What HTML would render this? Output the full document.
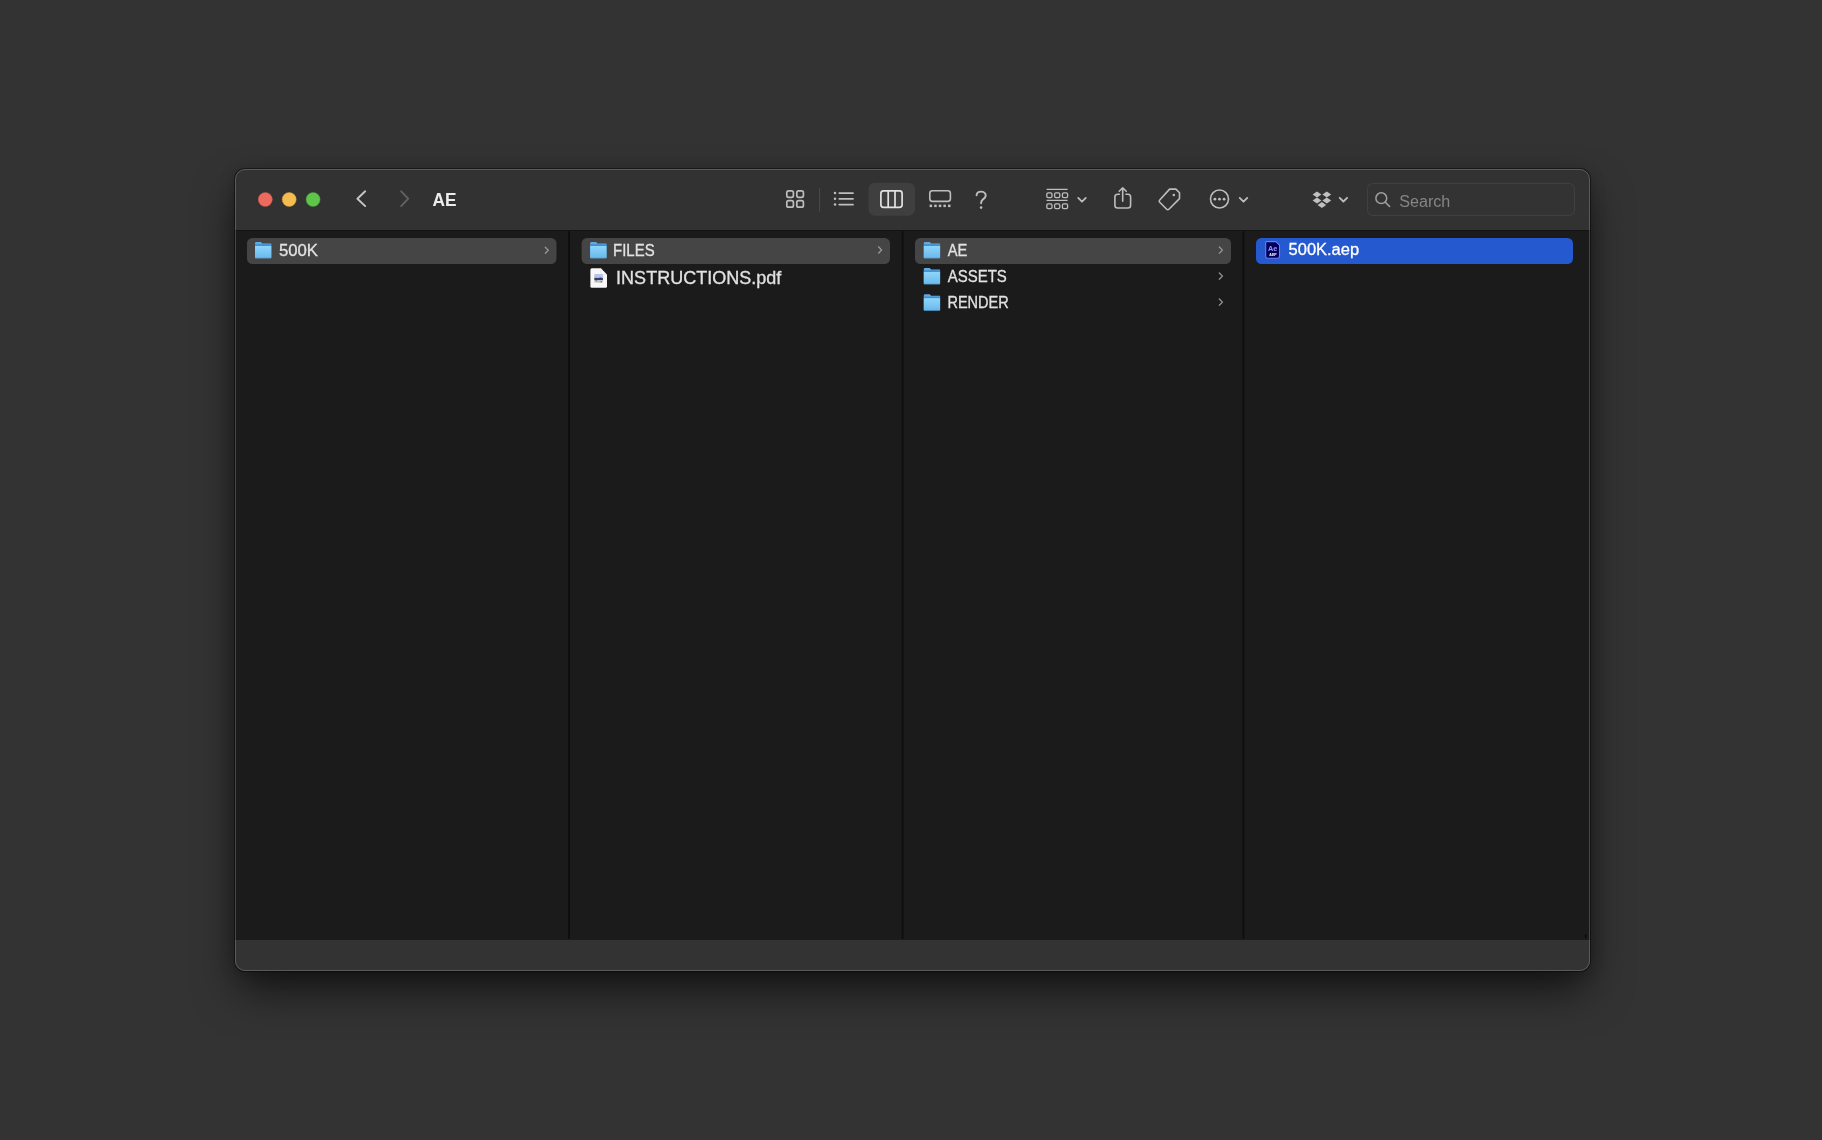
<!DOCTYPE html>
<html><head><meta charset="utf-8">
<style>
html,body{margin:0;padding:0;}
body{width:1822px;height:1140px;background:#333333;position:relative;overflow:hidden;font-family:"Liberation Sans",sans-serif;}
.win{position:absolute;left:235px;top:169px;width:1355px;height:802px;border-radius:10px;background:#323232;
  box-shadow:0 0 0 1px rgba(0,0,0,0.45), 0 22px 44px -4px rgba(0,0,0,0.62), 0 3px 16px rgba(0,0,0,0.22);overflow:hidden;}
.winborder{position:absolute;left:235px;top:169px;width:1355px;height:802px;border-radius:10px;box-sizing:border-box;border:1px solid rgba(255,255,255,0.2);pointer-events:none;}
.content{position:absolute;left:0;top:61px;width:100%;height:710px;background:#1b1b1b;border-top:1px solid #131313;box-sizing:border-box;}
.bottom{position:absolute;left:0;top:771px;width:100%;height:31px;background:#333333;}
svg.ov{position:absolute;left:0;top:0;width:1822px;height:1140px;will-change:transform;-webkit-font-smoothing:antialiased;}
</style></head><body>
<div class="win">
  <div class="content"></div>
  <div class="bottom"></div>
</div>
<div class="winborder"></div>
<svg class="ov" viewBox="0 0 1822 1140">
<defs>
  <linearGradient id="fg" x1="0" y1="0" x2="0" y2="1">
    <stop offset="0" stop-color="#8cd6fd"/><stop offset="1" stop-color="#6ab9ec"/>
  </linearGradient>
  <g id="folder">
    <path d="M0.3,1.2 Q0.3,0 1.5,0 H6.2 L7.6,1.5 H16.1 Q16.6,1.5 16.6,2 V15.8 H0.3 Z" fill="#62abdf"/>
    <rect x="0.3" y="2.3" width="16.3" height="1.5" fill="#3d8cd0"/>
    <path d="M0.3,3.9 H16.6 V15.6 Q16.6,16.2 16,16.2 H0.9 Q0.3,16.2 0.3,15.6 Z" fill="url(#fg)"/>
    <rect x="0.6" y="15.5" width="15.7" height="0.7" fill="#5aa6dc"/>
  </g>
</defs>
<!-- column dividers -->
<rect x="568" y="231" width="2" height="708" fill="#0e0e0e"/>
<rect x="901.7" y="231" width="1.8" height="708" fill="#0e0e0e"/>
<rect x="1242.5" y="231" width="1.8" height="708" fill="#0e0e0e"/>
<!-- traffic lights -->
<circle cx="265.3" cy="199.5" r="7.0" fill="#ee6a5f" stroke="#c9544a" stroke-width="0.5"/>
<circle cx="289.2" cy="199.5" r="7.0" fill="#f5bd4f" stroke="#d29a3c" stroke-width="0.5"/>
<circle cx="313.1" cy="199.5" r="7.0" fill="#5ec44a" stroke="#47a03a" stroke-width="0.5"/>
<!-- nav -->
<path d="M365.2,191.3 L357.4,198.7 L365.2,206.1" fill="none" stroke="#c6c6c6" stroke-width="1.9" stroke-linecap="round" stroke-linejoin="round"/>
<path d="M401.2,191.3 L408.2,198.7 L401.2,206.1" fill="none" stroke="#626262" stroke-width="1.9" stroke-linecap="round" stroke-linejoin="round"/>
<text x="432.6" y="205.6" font-family="Liberation Sans" font-weight="bold" font-size="18" fill="#ececec" textLength="24" lengthAdjust="spacingAndGlyphs">AE</text>
<!-- toolbar icons -->
<g fill="none" stroke="#bdbdbd" stroke-width="1.7">
  <rect x="786.8" y="190.8" width="6.6" height="6.6" rx="1.8"/>
  <rect x="796.8" y="190.8" width="6.6" height="6.6" rx="1.8"/>
  <rect x="786.8" y="200.6" width="6.6" height="6.6" rx="1.8"/>
  <rect x="796.8" y="200.6" width="6.6" height="6.6" rx="1.8"/>
</g>
<rect x="819" y="188.2" width="1.1" height="23.4" fill="#474747"/>
<g fill="#bdbdbd">
  <circle cx="835" cy="193.1" r="1.25"/><circle cx="835" cy="198.8" r="1.25"/><circle cx="835" cy="204.6" r="1.25"/>
</g>
<g stroke="#bdbdbd" stroke-width="1.8" stroke-linecap="round">
  <path d="M839.3,193.1 H853"/><path d="M839.3,198.8 H853"/><path d="M839.3,204.6 H853"/>
</g>
<rect x="868.5" y="182.7" width="46.5" height="33" rx="6.5" fill="#3f3f3f"/>
<g fill="none" stroke="#e2e2e2" stroke-width="1.7">
  <rect x="880.9" y="190.9" width="21.2" height="16.4" rx="2.6"/>
  <path d="M888.2,191 V207.2 M895,191 V207.2"/>
</g>
<rect x="929.8" y="190.8" width="20.6" height="10.6" rx="2.6" fill="none" stroke="#bdbdbd" stroke-width="1.6"/>
<g fill="#bdbdbd">
  <rect x="929.6" y="204.6" width="2.5" height="2.5"/><rect x="934.2" y="204.6" width="2.5" height="2.5"/><rect x="938.8" y="204.6" width="2.5" height="2.5"/><rect x="943.4" y="204.6" width="2.5" height="2.5"/><rect x="948" y="204.6" width="2.5" height="2.5"/>
</g>
<path d="M976.6,195.3 C976.6,192.7 978.6,191.6 981.1,191.6 C983.7,191.6 985.7,193.2 985.7,195.6 C985.7,198 983.8,198.7 982.6,199.7 C981.5,200.6 981.1,201.4 981.1,203.2" fill="none" stroke="#bdbdbd" stroke-width="1.95" stroke-linecap="round"/>
<circle cx="981.1" cy="207.6" r="1.3" fill="#bdbdbd"/>
<!-- group icon -->
<g stroke="#bdbdbd" fill="none">
  <path d="M1046.6,189.3 H1067.6 M1046.6,200.4 H1067.6" stroke-width="1.3"/>
  <g stroke-width="1.3">
    <rect x="1046.8" y="192.8" width="5.2" height="4.8" rx="1.4"/>
    <rect x="1054.6" y="192.8" width="5.2" height="4.8" rx="1.4"/>
    <rect x="1062.4" y="192.8" width="5.2" height="4.8" rx="1.4"/>
    <rect x="1046.8" y="203.8" width="5.2" height="4.8" rx="1.4"/>
    <rect x="1054.6" y="203.8" width="5.2" height="4.8" rx="1.4"/>
    <rect x="1062.4" y="203.8" width="5.2" height="4.8" rx="1.4"/>
  </g>
</g>
<g fill="none" stroke="#bdbdbd" stroke-width="1.8" stroke-linecap="round" stroke-linejoin="round">
  <path d="M1078.2,197.9 L1082,201.7 L1085.8,197.9"/>
  <path d="M1239.7,197.9 L1243.5,201.7 L1247.3,197.9"/>
  <path d="M1339.7,197.8 L1343.4,201.5 L1347.1,197.8"/>
</g>
<!-- share -->
<g fill="none" stroke="#bdbdbd" stroke-width="1.6" stroke-linecap="round" stroke-linejoin="round">
  <path d="M1119.4,194.2 H1117.6 Q1114.9,194.2 1114.9,196.9 V205.3 Q1114.9,208 1117.6,208 H1127.9 Q1130.6,208 1130.6,205.3 V196.9 Q1130.6,194.2 1127.9,194.2 H1126"/>
  <path d="M1122.7,188 V201.2 M1119.2,191.3 L1122.7,187.8 L1126.2,191.3"/>
</g>
<!-- tag -->
<path d="M1169.6,189.1 H1175.9 L1179.5,192.7 V198.6 L1168.9,209.2 Q1167.8,210.3 1166.7,209.2 L1159.7,202.2 Q1158.6,201.1 1159.7,200 Z" fill="none" stroke="#bdbdbd" stroke-width="1.6" stroke-linejoin="round"/>
<circle cx="1173.8" cy="194.9" r="1.25" fill="#bdbdbd"/>
<!-- more -->
<circle cx="1219.5" cy="199" r="9" fill="none" stroke="#bdbdbd" stroke-width="1.6"/>
<g fill="#bdbdbd"><circle cx="1214.9" cy="199.2" r="1.4"/><circle cx="1219.5" cy="199.2" r="1.4"/><circle cx="1224.1" cy="199.2" r="1.4"/></g>
<!-- dropbox -->
<g fill="#c0c0c0">
  <path d="M1317,191.6 L1321.4,194.5 L1317,197.4 L1312.6,194.5 Z"/>
  <path d="M1326.8,191.6 L1331.2,194.5 L1326.8,197.4 L1322.4,194.5 Z"/>
  <path d="M1317,197.6 L1321.4,200.5 L1317,203.4 L1312.6,200.5 Z"/>
  <path d="M1326.8,197.6 L1331.2,200.5 L1326.8,203.4 L1322.4,200.5 Z"/>
  <path d="M1321.9,202 L1326.2,204.9 L1321.9,207.9 L1317.6,204.9 Z"/>
</g>
<!-- search -->
<rect x="1367.5" y="183.5" width="207" height="32" rx="5.5" fill="#333333" stroke="#404040" stroke-width="1.1"/>
<circle cx="1381.3" cy="198.2" r="5.4" fill="none" stroke="#a0a0a0" stroke-width="1.5"/>
<path d="M1385.3,202.2 L1389.6,206.5" stroke="#a0a0a0" stroke-width="1.6" stroke-linecap="round"/>
<text x="1399.3" y="206.8" font-family="Liberation Sans" font-size="16" fill="#858585" textLength="51" lengthAdjust="spacingAndGlyphs">Search</text>

<!-- column 1 -->
<rect x="247" y="238" width="309.5" height="26" rx="5.5" fill="#454545"/>
<use href="#folder" x="254.7" y="242"/>
<text x="278.9" y="255.6" font-family="Liberation Sans" font-size="16" fill="#e2e2e2" stroke="#e2e2e2" stroke-width="0.3" textLength="39.1" lengthAdjust="spacingAndGlyphs">500K</text>
<path d="M545.3,247.3 L548.3,250.3 L545.3,253.3" fill="none" stroke="#989898" stroke-width="1.25" stroke-linecap="round" stroke-linejoin="round"/>
<!-- column 2 -->
<rect x="581.6" y="238" width="308.4" height="26" rx="5.5" fill="#454545"/>
<use href="#folder" x="589.9" y="242"/>
<text x="613.1" y="255.6" font-family="Liberation Sans" font-size="16" fill="#e2e2e2" stroke="#e2e2e2" stroke-width="0.3" textLength="41.5" lengthAdjust="spacingAndGlyphs">FILES</text>
<path d="M878.5,246.8 L881.6,250 L878.5,253.2" fill="none" stroke="#989898" stroke-width="1.25" stroke-linecap="round" stroke-linejoin="round"/>
<g>
  <path d="M590.4,269.8 Q590.4,268.3 591.9,268.3 H600.9 L607,274.5 V286.3 Q607,287.8 605.5,287.8 H591.9 Q590.4,287.8 590.4,286.3 Z" fill="#f8f8f8"/>
  <path d="M600.9,268.3 V273.2 Q600.9,274.5 602.2,274.5 H607" fill="none" stroke="#dcdcdc" stroke-width="0.5"/>
  <path d="M594.3,274.6 Q594.3,274.1 594.8,274.1 H602.4 Q602.9,274.1 602.9,274.6 V278 H594.3 Z" fill="#b3c5f0"/>
  <path d="M594.3,278 L596,277.7 L598,278.1 L600.5,277.6 L602.9,278 V280 H594.3 Z" fill="#353d62"/>
  <path d="M594.3,280 H602.9 V282.2 Q600,283.2 597,282.6 Q595.2,282.3 594.3,282.6 Z" fill="#c4c4c4"/>
  <rect x="595.5" y="280.3" width="1.6" height="0.9" fill="#6a6a6a"/>
  <rect x="600.6" y="281.4" width="1.4" height="0.9" fill="#5a5a5a"/>
</g>
<text x="616.1" y="284.4" font-family="Liberation Sans" font-size="17.5" fill="#e2e2e2" stroke="#e2e2e2" stroke-width="0.3" textLength="165.2" lengthAdjust="spacingAndGlyphs">INSTRUCTIONS.pdf</text>
<!-- column 3 -->
<rect x="915" y="238" width="316" height="26" rx="5.5" fill="#454545"/>
<use href="#folder" x="923.5" y="242"/>
<use href="#folder" x="923.5" y="268"/>
<use href="#folder" x="923.5" y="294.3"/>
<text x="947.8" y="255.6" font-family="Liberation Sans" font-size="16" fill="#e2e2e2" stroke="#e2e2e2" stroke-width="0.3" textLength="19.6" lengthAdjust="spacingAndGlyphs">AE</text>
<text x="947.7" y="281.6" font-family="Liberation Sans" font-size="16" fill="#e2e2e2" stroke="#e2e2e2" stroke-width="0.3" textLength="59.1" lengthAdjust="spacingAndGlyphs">ASSETS</text>
<text x="947.4" y="307.6" font-family="Liberation Sans" font-size="16" fill="#e2e2e2" stroke="#e2e2e2" stroke-width="0.3" textLength="61.3" lengthAdjust="spacingAndGlyphs">RENDER</text>
<g fill="none" stroke="#989898" stroke-width="1.25" stroke-linecap="round" stroke-linejoin="round">
  <path d="M1219.3,247 L1222.5,250.1 L1219.3,253.2"/>
  <path d="M1219.3,273 L1222.5,276.1 L1219.3,279.2"/>
  <path d="M1219.3,299 L1222.5,302.1 L1219.3,305.2"/>
</g>
<rect x="1585" y="934" width="1.2" height="4" fill="#050505"/>
<!-- column 4 -->
<rect x="1256" y="238" width="317" height="26" rx="5.5" fill="#2559cf"/>
<g>
  <path d="M1266.3,241.6 H1275.8 L1279.5,245.2 V256.6 Q1279.5,258.3 1277.8,258.3 H1267.4 Q1265.7,258.3 1265.7,256.6 V243.3 Q1265.7,241.6 1266.3,241.6 Z" fill="#00005b" stroke="#6d7cf0" stroke-width="1.1"/>
  <text x="1267.9" y="250.8" font-family="Liberation Sans" font-weight="bold" font-size="7.3" fill="#9d96ff">Ae</text>
  <text x="1269.3" y="256" font-family="Liberation Sans" font-weight="bold" font-size="3.6" fill="#ffffff">AEP</text>
</g>
<text x="1288.6" y="255.4" font-family="Liberation Sans" font-size="16" fill="#ffffff" stroke="#ffffff" stroke-width="0.3" textLength="70.5" lengthAdjust="spacingAndGlyphs">500K.aep</text>
</svg>
</body></html>
